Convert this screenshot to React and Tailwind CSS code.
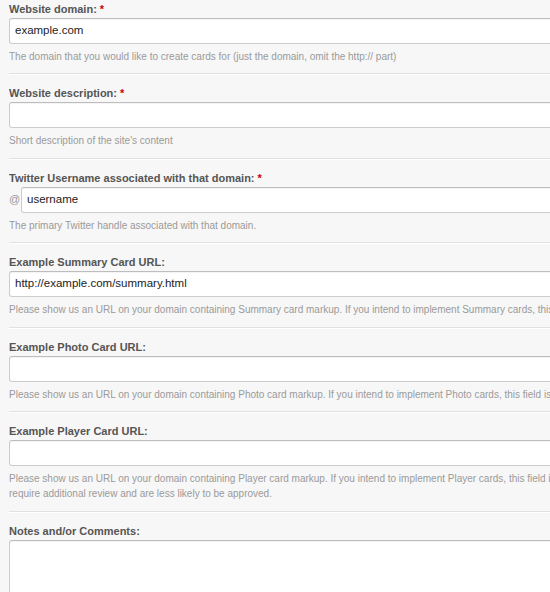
const fields = [
  {
    label: "Website domain:",
    required: true,
    value: "example.com",
    help: ["The domain that you would like to create cards for (just the domain, omit the http:// part)"],
  },
  {
    label: "Website description:",
    required: true,
    value: "",
    help: ["Short description of the site's content"],
  },
  {
    label: "Twitter Username associated with that domain:",
    required: true,
    value: "username",
    prefix: "@",
    help: ["The primary Twitter handle associated with that domain."],
  },
  {
    label: "Example Summary Card URL:",
    value: "http://example.com/summary.html",
    help: ["Please show us an URL on your domain containing Summary card markup. If you intend to implement Summary cards, this field is required."],
  },
  {
    label: "Example Photo Card URL:",
    value: "",
    help: ["Please show us an URL on your domain containing Photo card markup. If you intend to implement Photo cards, this field is required."],
  },
  {
    label: "Example Player Card URL:",
    value: "",
    help: [
      "Please show us an URL on your domain containing Player card markup. If you intend to implement Player cards, this field is required. Player cards",
      "require additional review and are less likely to be approved.",
    ],
  },
]

function Label({ text, required }) {
  return (
    <label className="block h-[14px] text-[11px] leading-[14px] font-bold text-[#555555] whitespace-nowrap">
      {text}
      {required && <span className="ml-[3px] text-[#cc0000]">*</span>}
    </label>
  )
}

function TextInput({ value, className = "" }) {
  return (
    <div
      className={`h-[26px] flex items-center bg-white border border-[#cccccc] border-t-[#bdbdbd] rounded-[3px] shadow-[inset_0_1px_1px_rgba(0,0,0,0.05)] px-[5px] text-[11.5px] text-[#222222] whitespace-nowrap ${className}`}
    >
      {value}
    </div>
  )
}

function Field({ field, first }) {
  return (
    <div
      className={`${first ? "pt-[2px] pb-[9px]" : "pt-[12px] pb-[9.5px]"} border-b border-[#e1e1e1] shadow-[0_1px_0_#ffffff]`}
    >
      <Label text={field.label} required={field.required} />
      <div className="mt-[2px] flex items-center">
        {field.prefix && (
          <span className="w-[12px] text-[11px] text-[#999999]">{field.prefix}</span>
        )}
        <TextInput value={field.value} className="flex-1" />
      </div>
      <div className="mt-[5px] text-[10px] leading-[15px] text-[#9a9a9a]">
        {field.help.map((line, i) => (
          <div key={i} className="whitespace-nowrap">{line}</div>
        ))}
      </div>
    </div>
  )
}

export default function App() {
  return (
    <div
      className="w-[550px] h-[592px] overflow-hidden bg-[#f7f7f7]"
      style={{ fontFamily: '"Liberation Sans", Arial, sans-serif' }}
    >
      <form className="w-[720px] pl-[9px]">
        {fields.map((field, i) => (
          <Field key={field.label} field={field} first={i === 0} />
        ))}
        <div className="pt-[12px]">
          <Label text="Notes and/or Comments:" />
          <div className="mt-[2px] h-[120px] bg-white border border-[#cccccc] border-t-[#bdbdbd] rounded-[3px] shadow-[inset_0_1px_1px_rgba(0,0,0,0.05)]" />
        </div>
      </form>
    </div>
  )
}
